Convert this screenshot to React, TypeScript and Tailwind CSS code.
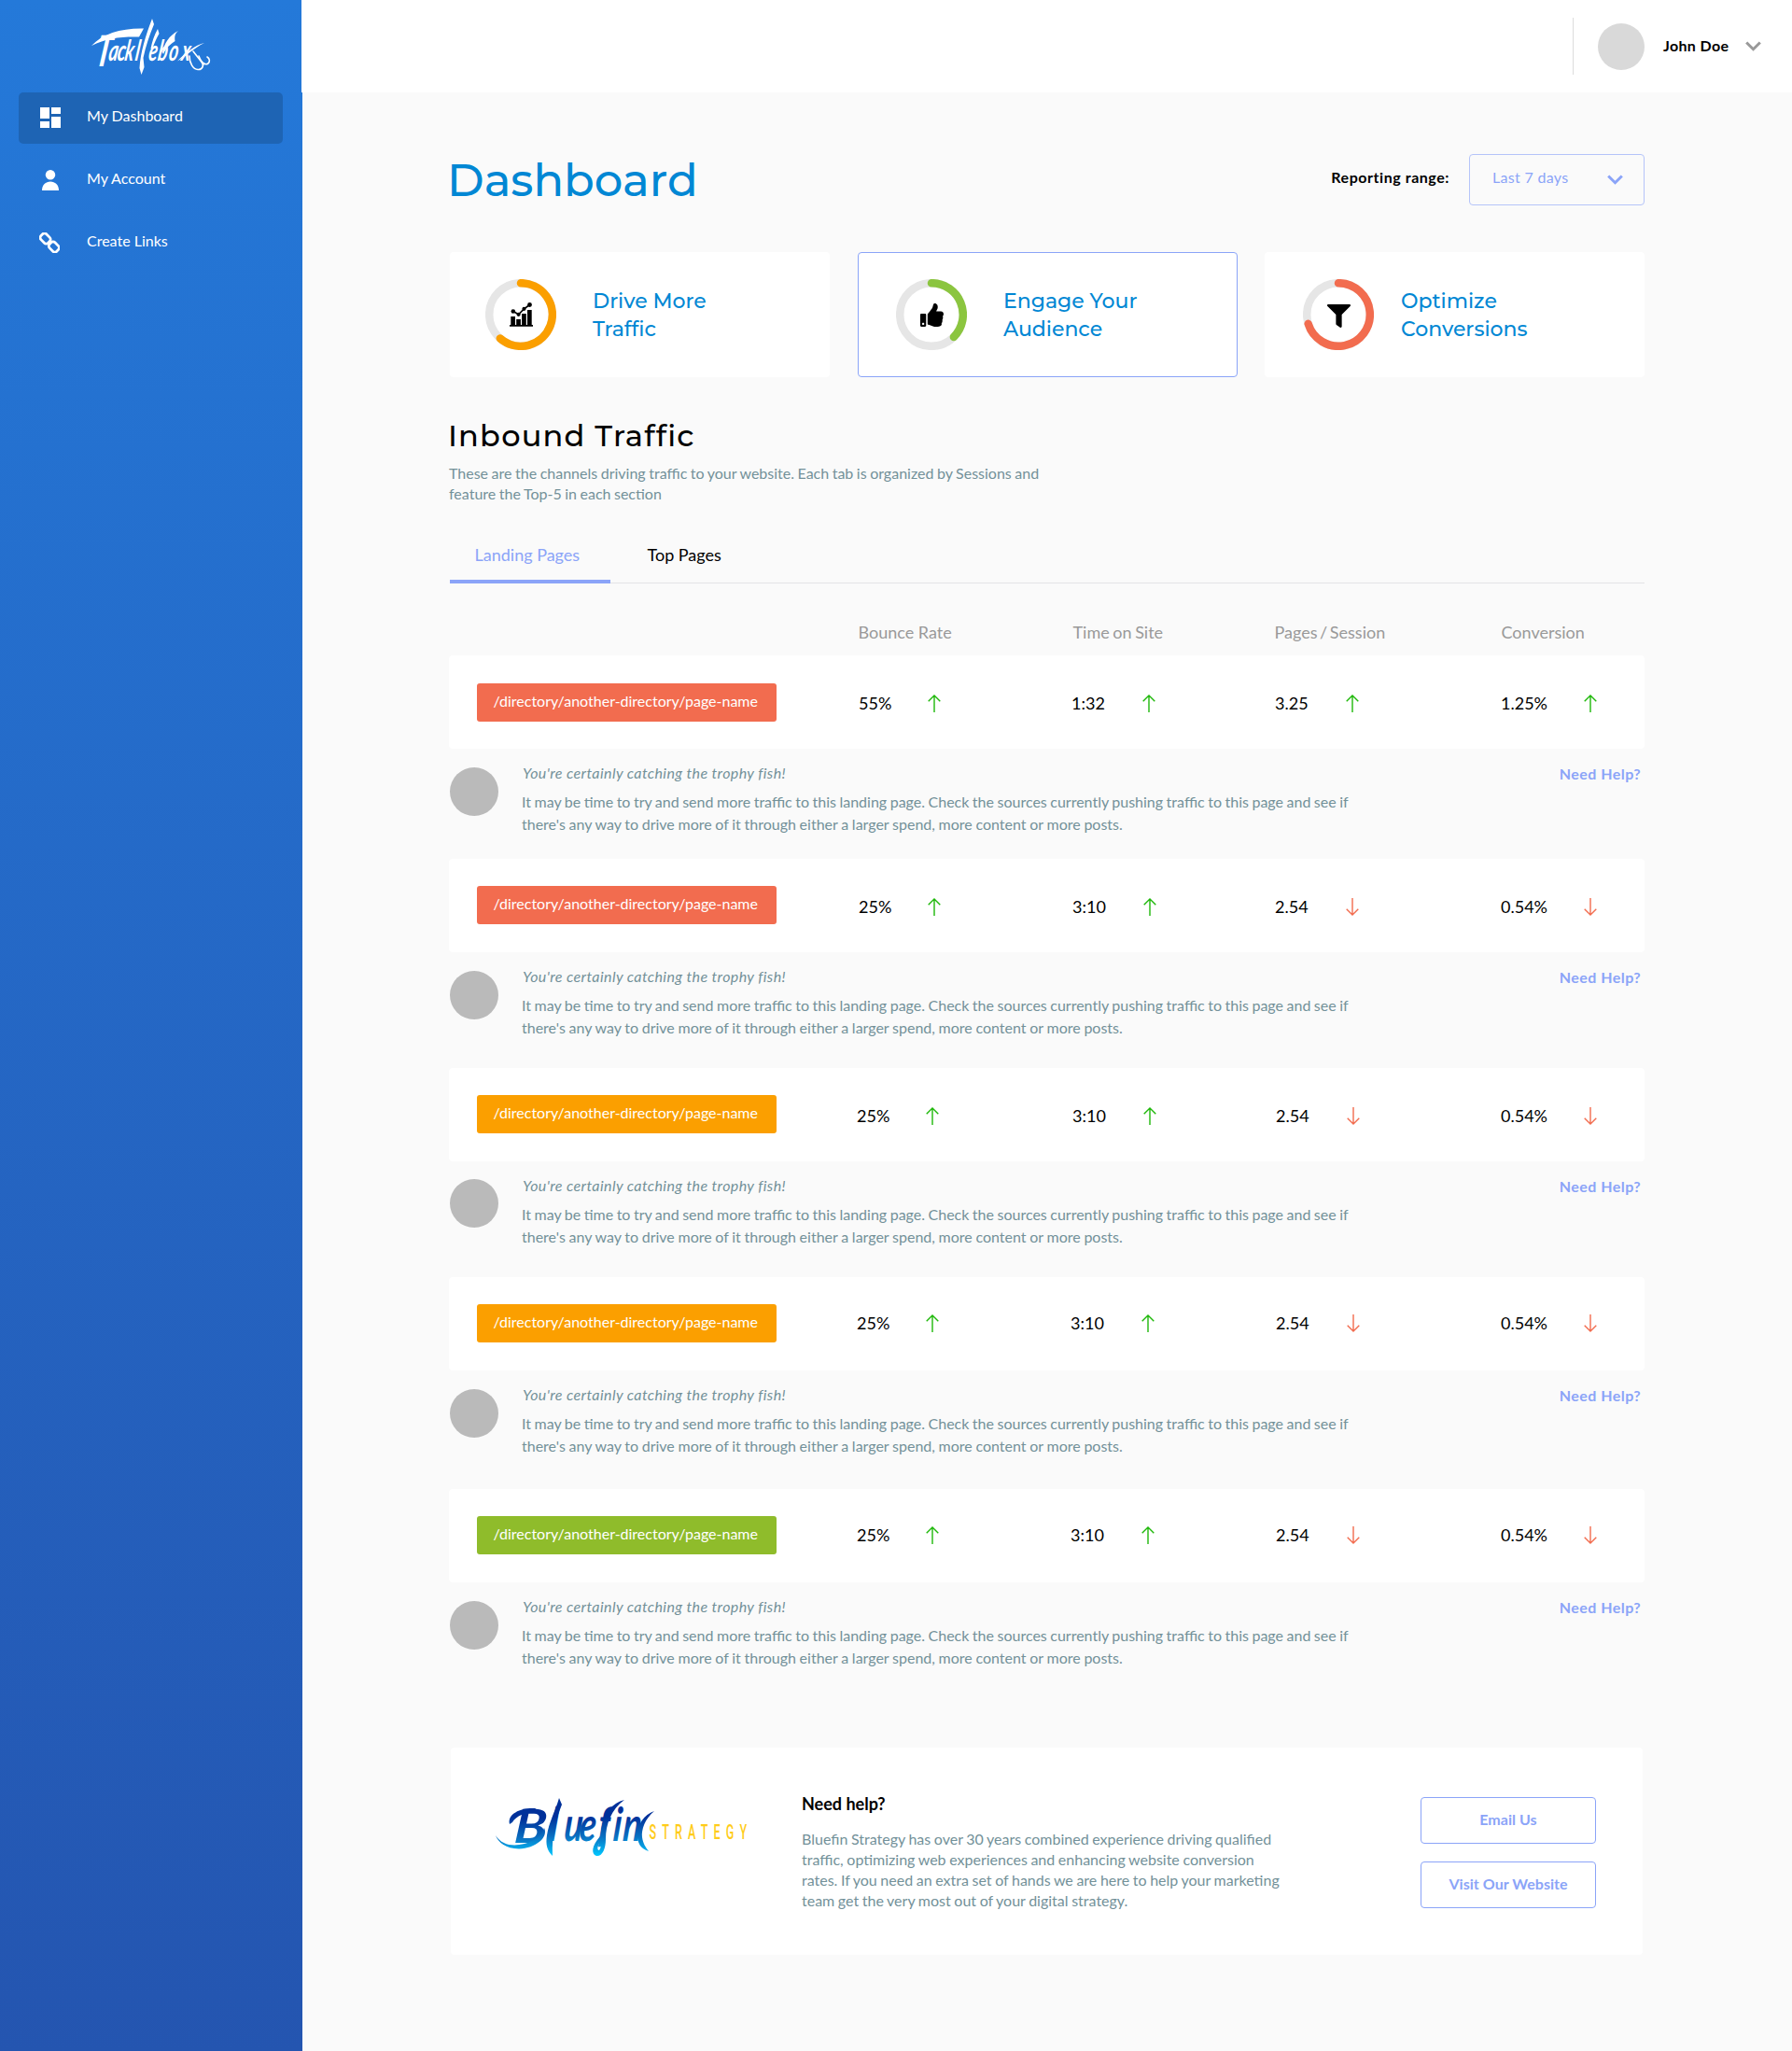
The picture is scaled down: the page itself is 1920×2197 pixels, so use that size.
import React from "react";
import { FaFilter, FaThumbsUp } from "react-icons/fa";

const SANS = "font-['Lato',sans-serif]";
const DISPLAY = "font-['Montserrat','Inter',sans-serif]";

function TackleboxLogo() {
  return (
    <svg width="132" height="64" viewBox="96 18 132 64" className="overflow-visible" fill="#fff">
      <path d="M98 49C110 36 130 30 154 30.500L149 39.500C130 39 114 41 98 49Z" />
      <g transform="translate(115.500 65) skewX(-9) scale(0.620 1)">
        <text fontFamily="Lato" fontWeight="700" fontStyle="italic" fontSize="31">
          <tspan x="-21" y="5.500" fontSize="46" fontWeight="900">T</tspan>
          <tspan x="0 15 28 46 69 85 104 126" y="0">acklebox</tspan>
        </text>
      </g>
      <path d="M163 20L165 26C160 38 156 50 153.500 62L154.500 72L151.500 80L149.500 73C150.500 56 156 38 163 20Z" />
      <path d="M169 31L170.500 36C167.500 41 165 47 163 53L161.500 52C163 45 165 38 169 31Z" />
      <path d="M191 33C187 36 187 40 187.500 44C183 47 178 51 175 58L174 56C176 47 181 38 191 33Z" />
      <path d="M219 46C210 48 199 56 190 65.500C200 60 208 51 219 46Z" />
      <g fill="none" stroke="#fff" strokeWidth="1.600" strokeLinecap="round">
        <path d="M203 60C203 68 207 74 212 74.500C217 75 219 70 216 66" />
        <path d="M213 60C216 68 220 70 223 68C225 66 225 63 222 61" />
        <path d="M207 55L218 69" />
      </g>
    </svg>
  );
}

function BluefinLogo() {
  return (
    <svg width="274" height="68" viewBox="530 1924 274 68" className="overflow-visible">
      <defs>
        <linearGradient id="bluefin" gradientUnits="userSpaceOnUse" x1="0" y1="1946" x2="0" y2="1988">
          <stop offset="0" stopColor="#00309a" />
          <stop offset="0.500" stopColor="#0a6fc0" />
          <stop offset="1" stopColor="#00c8ff" />
        </linearGradient>
        <linearGradient id="bluefin-text" gradientUnits="userSpaceOnUse" x1="0" y1="-26" x2="0" y2="16">
          <stop offset="0" stopColor="#00309a" />
          <stop offset="0.500" stopColor="#0a6fc0" />
          <stop offset="1" stopColor="#00c8ff" />
        </linearGradient>
      </defs>
      <g transform="translate(550 1974) skewX(-5) scale(1.120 1)" fill="url(#bluefin-text)">
        <text fontFamily="Lato" fontWeight="700" fontStyle="italic" fontSize="50">
          B
        </text>
      </g>
      <g transform="translate(588 1972) skewX(-5) scale(0.740 1)" fill="url(#bluefin-text)">
        <text x="0 21 43 70 92 106" y="0" fontFamily="Lato" fontWeight="700" fontStyle="italic" fontSize="50">
          luefin
        </text>
      </g>
      <g fill="url(#bluefin)">
        <path d="M531 1966C538 1977 550 1978 562 1975C573 1972 580 1967 583 1958C588 1968 574 1980 556 1980.500C542 1980 534 1974 531 1966Z" />
        <path d="M546 1954C543 1942 560 1936 573 1937L582 1942C568 1940 554 1943 549 1952Z" />
        <path d="M599 1926L602 1933C596 1948 591 1964 592 1988C586 1982 584.500 1976 586 1966C588 1952 595 1940 599 1926Z" />
        <path d="M669 1928C655 1938 649 1954 649 1970C649 1981 645 1989 639 1988C633 1986 634 1977 643 1967L645 1970C640 1976 639 1982 642 1982C646 1978 642 1966 645 1955C648 1942 656 1931 669 1928Z" />
        <path d="M701 1940C691 1948 687 1960 688 1968C689 1975 692 1979 695 1983C686 1980 683 1974 683 1966C683 1954 690 1944 701 1940Z" />
      </g>
      <g transform="translate(695.500 1970) scale(0.560 1)">
        <text x="0" y="0" fontFamily="Roboto" fontWeight="500" fontSize="22.500" fill="#ffcc1a" textLength="187">
          STRATEGY
        </text>
      </g>
    </svg>
  );
}

function DashboardIcon() {
  return (
    <svg width="22" height="22" viewBox="0 0 22 22" fill="#fff">
      <path d="M0 0h10v12H0zM12 0h10v7H12zM0 15h10v7H0zM12 10h10v12H12z" />
    </svg>
  );
}

function UserIcon() {
  return (
    <svg width="22" height="22" viewBox="0 0 22 22" fill="#fff">
      <circle cx="11" cy="5.200" r="5.200" />
      <path d="M2 22C2 16 6 12.500 11 12.500S20 16 20 22Z" />
    </svg>
  );
}

function LinkIcon() {
  return (
    <svg width="22" height="22" viewBox="0 0 22 22" fill="none" stroke="#fff" strokeWidth="2.800" className="-ml-px">
      <rect x="1.200" y="2.400" width="10.800" height="8.200" rx="2.900" transform="rotate(45 6.600 6.500)" />
      <rect x="10.400" y="11.400" width="10.800" height="8.200" rx="2.900" transform="rotate(45 15.800 15.500)" />
    </svg>
  );
}

function Chevron({ className }: { className: string }) {
  return (
    <svg width="17" height="11" viewBox="0 0 17 11" fill="none" stroke="currentColor" strokeWidth="3" className={className}>
      <path d="M1.200 1.500L8.500 8.700L15.800 1.500" />
    </svg>
  );
}

function ChartIcon() {
  return (
    <svg width="25" height="26" viewBox="0 0 25 26" fill="#000">
      <path d="M0 24h25v1.800H0zM1.300 15h4.700v9H1.300zM7.200 18h4.700v6H7.200zM13.100 12h4.700v12H13.100zM19 8h4.700v16H19z" />
      <path d="M3.800 9.500L9.600 12.800L15.500 6.800L21.500 2.500" fill="none" stroke="#000" strokeWidth="1.700" />
      <circle cx="3.800" cy="9.500" r="2.300" />
      <circle cx="9.600" cy="12.800" r="2.100" />
      <circle cx="15.500" cy="6.800" r="2.100" />
      <circle cx="21.500" cy="2.500" r="2.400" />
    </svg>
  );
}

function Arrow({ up }: { up: boolean }) {
  return up ? (
    <svg width="14" height="19" viewBox="0 0 14 19" fill="none" stroke="#1fb80a" strokeWidth="1.400" className="mt-0.5 ml-[0.500px]">
      <path d="M7 19V1M0.700 7.300L7 1L13.300 7.300" />
    </svg>
  ) : (
    <svg width="14" height="19" viewBox="0 0 14 19" fill="none" stroke="#f26c4f" strokeWidth="1.400" className="mt-0.5 ml-[0.500px]">
      <path d="M7 0V18M0.700 11.700L7 18L13.300 11.700" />
    </svg>
  );
}

function Ring({ degrees, color, children }: { degrees: number; color: string; children: React.ReactNode }) {
  const r = 33.8;
  const a = (degrees * Math.PI) / 180;
  const x = 38 + r * Math.sin(a);
  const y = 38 - r * Math.cos(a);
  return (
    <div className="grid size-[76px] shrink-0 place-items-center">
      <svg width="76" height="76" viewBox="0 0 76 76" fill="none" strokeWidth="8.500" className="col-start-1 row-start-1">
        <circle cx="38" cy="38" r={r} stroke="#e6e6e6" />
        <path d={`M38 ${38 - r}A${r} ${r} 0 ${degrees > 180 ? 1 : 0} 1 ${x} ${y}`} stroke={color} strokeLinecap="round" />
      </svg>
      <div className="col-start-1 row-start-1">{children}</div>
    </div>
  );
}

const nav = [
  { label: "My Dashboard", icon: <DashboardIcon />, active: true },
  { label: "My Account", icon: <UserIcon />, active: false },
  { label: "Create Links", icon: <LinkIcon />, active: false },
];

const goals = [
  { lines: ["Drive More", "Traffic"], degrees: 221, color: "#fb9f00", icon: <ChartIcon />, box: "pl-[38px] gap-[39px]" },
  {
    lines: ["Engage Your", "Audience"],
    degrees: 135,
    color: "#8bc53f",
    icon: <FaThumbsUp size={25} className="mt-px" />,
    box: "ml-[30px] mr-[29px] pl-10 gap-[39px] border border-[#8ba4f8]",
  },
  {
    lines: ["Optimize", "Conversions"],
    degrees: 253,
    color: "#f26c4f",
    icon: <FaFilter size={25} className="mt-0.5" />,
    box: "pl-[41px] gap-[29px]",
  },
];

type Cell = [string, boolean];
const first: Cell[] = [["55%", true], ["1:32", true], ["3.25", true], ["1.25%", true]];
const rest: Cell[] = [["25%", true], ["3:10", true], ["2.54", false], ["0.54%", false]];

const pages = [
  { cells: first, tag: "bg-[#f26c4f] mt-[30px]", columns: "ml-[88px] mt-10 grid-cols-[228px_218px_242px_150px]", block: "h-[218px]", avatar: "mt-5" },
  { cells: rest, tag: "bg-[#f26c4f] mt-[29px]", columns: "ml-[88px] mt-10 grid-cols-[229px_217px_242px_150px]", block: "h-[224px]", avatar: "mt-5" },
  { cells: rest, tag: "bg-[#fb9f00] mt-[29px]", columns: "ml-[86px] mt-10 grid-cols-[231px_218px_241px_150px]", block: "h-[224px]", avatar: "mt-[19px]" },
  { cells: rest, tag: "bg-[#fb9f00] mt-[29px]", columns: "ml-[86px] mt-[38px] grid-cols-[229px_220px_241px_150px]", block: "h-[227px]", avatar: "mt-5" },
  { cells: rest, tag: "bg-[#8fbc2b] mt-[29px]", columns: "ml-[86px] mt-[38px] grid-cols-[229px_220px_241px_150px]", block: "h-[277px]", avatar: "mt-5" },
];

const valueWidths = ["w-[73px]", "w-[75px]", "w-[75px]", "w-[88px]"];

export default function App() {
  return (
    <div className={`flex h-[2197px] w-[1920px] overflow-hidden bg-[#fafafa] text-base text-black ${SANS}`}>
      <aside className="w-[324px] shrink-0 bg-gradient-to-b from-[#2479d9] to-[#2455b0] text-white">
        <div className="h-[99px] pt-[18px] pl-24">
          <TackleboxLogo />
        </div>
        <nav className="flex flex-col gap-3 pl-5">
          {nav.map((n) => (
            <a key={n.label} className={`flex h-[55px] w-[283px] rounded-[5px] ${n.active ? "bg-[#1e64b4]" : ""}`}>
              <span className="mt-4 ml-[23px] w-[50px]">{n.icon}</span>
              <span className="mt-[13px] leading-6">{n.label}</span>
            </a>
          ))}
        </nav>
      </aside>

      <div className="flex-1">
        <header className="-ml-px flex h-[99px] items-center justify-end bg-white pr-[33px]">
          <div className="mr-[26px] h-[61px] w-px bg-[#dcdcdc]" />
          <div className="mr-5 size-[50px] rounded-full bg-[#d9d9d9]" />
          <span className="mr-[17px] mb-0.5 w-[71px] font-bold tracking-[0.350px] whitespace-nowrap">John Doe</span>
          <Chevron className="text-[#999]" />
        </header>

        <main className="ml-[158px] w-[1280px]">
          <div className="flex h-[171px]">
            <h1 className={`mt-[62px] -ml-[3px] text-5xl leading-[64px] font-medium text-[#0087d4] ${DISPLAY}`}>Dashboard</h1>
            <span className="mt-[79px] ml-auto leading-6 font-bold tracking-[0.550px]">Reporting range:</span>
            <button className="mt-[66px] ml-[21px] flex h-[55px] w-[188px] rounded-[4px] border border-[#b5c4f9] pt-3 pl-6 text-[#8ba4f8]">
              <span className="w-[123px] text-left leading-6 tracking-[0.300px]">Last 7 days</span>
              <Chevron className="mt-[9px]" />
            </button>
          </div>

          <div className="flex">
            {goals.map((g) => (
              <section key={g.lines[0]} className={`flex h-[134px] w-[407px] items-center rounded-[4px] bg-white ${g.box}`}>
                <Ring degrees={g.degrees} color={g.color}>
                  {g.icon}
                </Ring>
                <h2 className={`pt-0.5 text-[22px] leading-[30px] font-medium text-[#0087d4] ${DISPLAY}`}>
                  {g.lines[0]}
                  <br />
                  {g.lines[1]}
                </h2>
              </section>
            ))}
          </div>

          <h2 className={`mt-[43px] -ml-0.5 text-[32px] leading-[40px] font-medium tracking-[1.200px] ${DISPLAY}`}>Inbound Traffic</h2>
          <p className="mt-[9px] -ml-px w-[660px] leading-[22px] [word-spacing:-0.57px] text-[#739199]">
            These are the channels driving traffic to your website. Each tab is organized by Sessions and
            <br />
            feature the Top-5 in each section
          </p>

          <div className="mt-[39px] flex h-[46px] border-b border-[#e3e4e6] text-lg leading-[30px]">
            <div className="h-[46px] w-[172px] border-b-4 border-[#8ba4f8] pl-[26.500px] text-[#8ba4f8]">Landing Pages</div>
            <div className="ml-[39.500px]">Top Pages</div>
          </div>

          <div className="flex h-[77px] pt-[38px] text-lg leading-[28px] text-[#999]">
            <span className="ml-[437.500px] w-[230px]">Bounce Rate</span>
            <span className="w-[216px] [word-spacing:-1px]">Time on Site</span>
            <span className="w-[243px] [word-spacing:-2px]">Pages / Session</span>
            <span>Conversion</span>
          </div>

          {pages.map((p, i) => (
            <article key={i} className={p.block}>
              <div className="-ml-px flex h-[100px] w-[1281px] rounded-[4px] bg-white">
                <div className={`ml-[30px] h-[41px] w-[321px] shrink-0 rounded-[3px] pt-[7px] pl-[17.500px] leading-6 text-white ${p.tag}`}>
                  /directory/another-directory/page-name
                </div>
                <div className={`grid h-6 text-lg leading-[22px] ${p.columns}`}>
                  {p.cells.map(([value, up], c) => (
                    <div key={c} className="flex">
                      <span className={valueWidths[c]}>{value}</span>
                      <Arrow up={up} />
                    </div>
                  ))}
                </div>
              </div>
              <div className="flex">
                <div className={`size-[52px] shrink-0 rounded-full bg-[#bababa] ${p.avatar}`} />
                <div className="ml-[25px] pt-[14px] leading-6 text-[#739199]">
                  <p className="ml-px tracking-[0.400px] italic">You're certainly catching the trophy fish!</p>
                  <p className="mt-[7px]">
                    <span className="[word-spacing:-0.59px]">
                      It may be time to try and send more traffic to this landing page. Check the sources currently pushing traffic to this page and see if
                    </span>
                    <br />
                    <span className="[word-spacing:-0.4px]">
                      there's any way to drive more of it through either a larger spend, more content or more posts.
                    </span>
                  </p>
                </div>
                <a className="mt-[15px] mr-1 ml-auto leading-6 font-bold tracking-[0.460px] text-[#8ba4f8]">Need Help?</a>
              </div>
            </article>
          ))}

          <footer className="ml-px flex h-[222px] w-[1277px] rounded-[4px] bg-white">
            <div className="mt-[52px] ml-[47px] w-[329px]">
              <BluefinLogo />
            </div>
            <div className="mt-[46px] w-[663px]">
              <h3 className="text-lg leading-[28px] font-bold">Need help?</h3>
              <p className="mt-[13px] leading-[22px] [word-spacing:-0.5px] text-[#739199]">
                Bluefin Strategy has over 30 years combined experience driving qualified
                <br />
                traffic, optimizing web experiences and enhancing website conversion
                <br />
                rates. If you need an extra set of hands we are here to help your marketing
                <br />
                team get the very most out of your digital strategy.
              </p>
            </div>
            <div className="mt-[53px] flex flex-col gap-[19px] font-bold text-[#8ba4f8]">
              <button className="h-[50px] w-[188px] rounded-[4px] border border-[#8ba4f8] pb-0.5 leading-6 tracking-[0.050px]">Email Us</button>
              <button className="h-[50px] w-[188px] rounded-[4px] border border-[#8ba4f8] pb-0.5 leading-6 tracking-[0.050px]">Visit Our Website</button>
            </div>
          </footer>
        </main>
      </div>
    </div>
  );
}
